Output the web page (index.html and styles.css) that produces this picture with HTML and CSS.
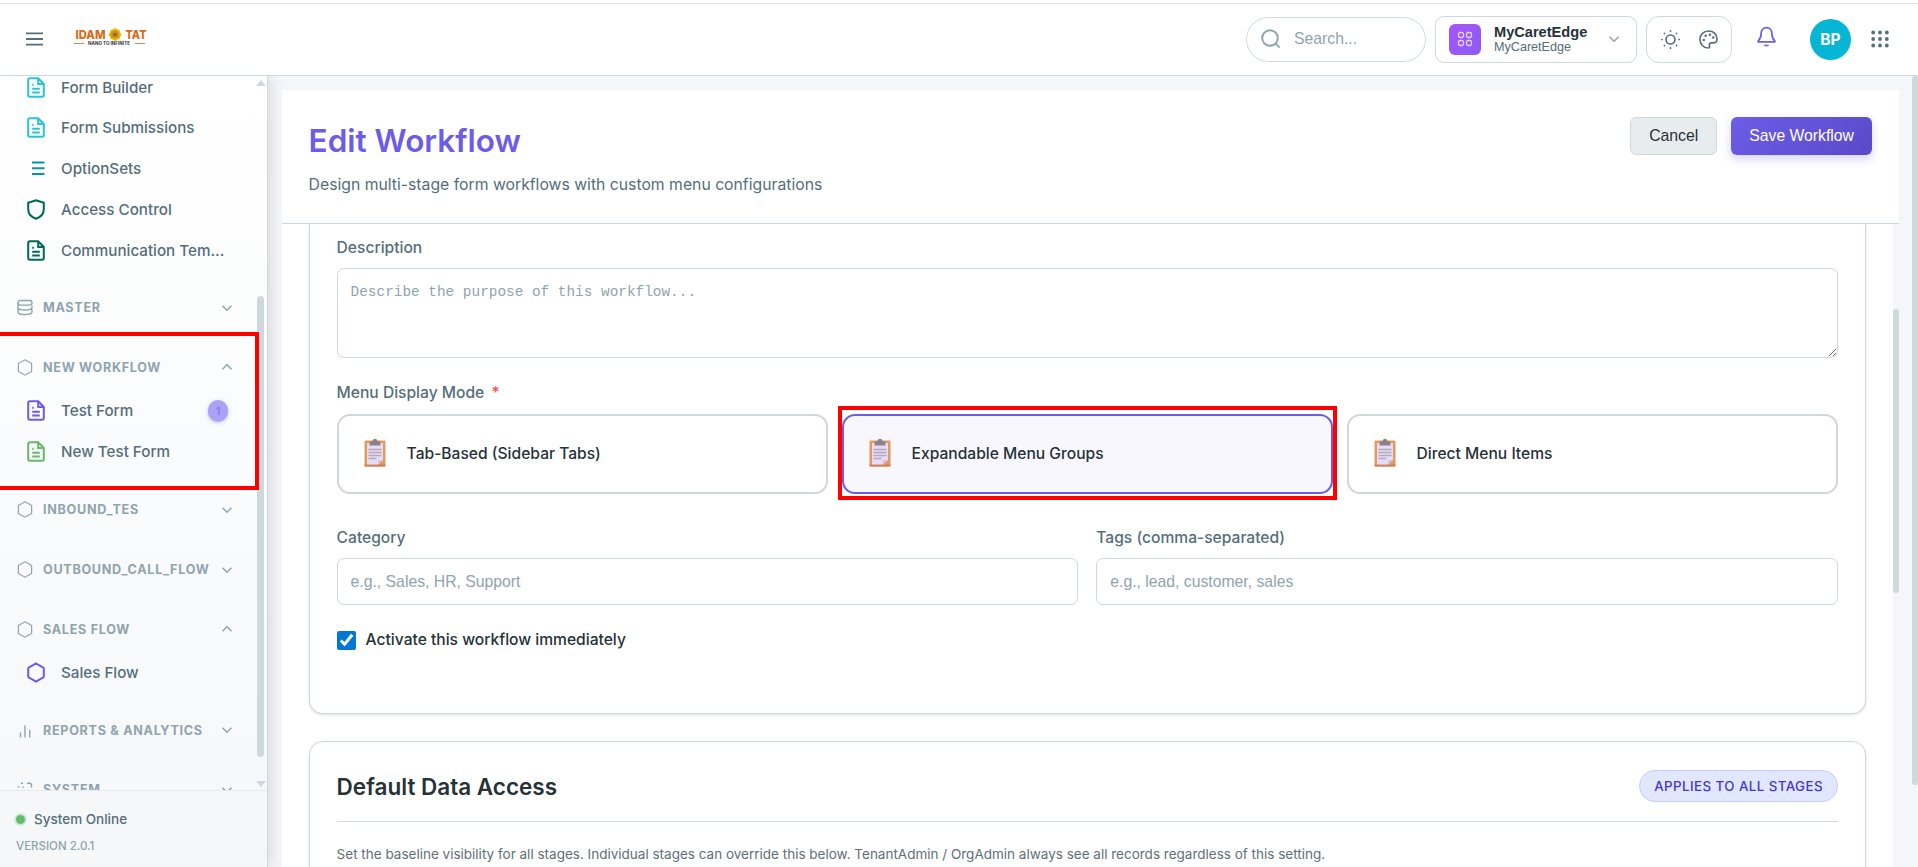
FILE: index.html
```html
<!DOCTYPE html>
<html lang="en">
<head>
    <meta charset="UTF-8">
    <meta name="viewport" content="width=device-width, initial-scale=1.0">
    <title>Edit Workflow</title>
    <link rel="stylesheet" href="styles.css">
</head>
<body>
    <svg class="sprite" xmlns="http://www.w3.org/2000/svg">
        <symbol id="i-file" viewBox="0 0 18 21">
            <path d="M3 1.2h8.2L16.8 7v11a1.8 1.8 0 0 1-1.8 1.8H3A1.8 1.8 0 0 1 1.2 18V3A1.8 1.8 0 0 1 3 1.2z"/>
            <path d="M11.2 1.2V7h5.6M5.2 7.8h1.6M5.2 11.7h7.6M5.2 15.4h7.6"/>
        </symbol>
        <symbol id="i-list" viewBox="0 0 18 21"><path d="M5 4.5h12.5M5 10.3h12.5M5 16h12.5"/></symbol>
        <symbol id="i-shield" viewBox="0 0 18 21"><path d="M9 1.2l7.8 2.6v6.4c0 4.6-3 7.8-7.8 9.6-4.8-1.8-7.8-5-7.8-9.6V3.8z"/></symbol>
        <symbol id="i-hex" viewBox="0 0 18 20"><path d="M9 1l7.300 4.100a1 1 0 0 1 .5.9v8a1 1 0 0 1-.5.9L9 19l-7.300-4.100a1 1 0 0 1-.5-.9V6a1 1 0 0 1 .5-.9z"/></symbol>
        <symbol id="i-db" viewBox="0 0 16 16">
            <rect x="1" y="1" width="14" height="4.6" rx="2.3"/>
            <path d="M1 3.5v9c0 1.400 2.500 2.500 7 2.500s7-1.100 7-2.500V9.800M1 8c0 1.400 2.500 2.500 7 2.500S15 9.400 15 8V6.200"/>
        </symbol>
        <symbol id="i-bars" viewBox="0 0 16 16"><path d="M3.500 10v5M8 3v12M12.700 7.500V15"/></symbol>
        <symbol id="i-scan" viewBox="0 0 16 16"><path d="M1.500 6V4.500M4 1.800h2M10 1.800h2.500a2 2 0 0 1 2 2V6M1.500 10v2.500a2 2 0 0 0 2 2H6M10 14.500h2.500a2 2 0 0 0 2-2V10M6 5v1.500"/></symbol>
        <symbol id="i-chev" viewBox="0 0 12 12"><path d="M1.500 3.800L6 8.300l4.500-4.500"/></symbol>
        <symbol id="i-clipboard" viewBox="0 0 22 28">
            <rect x="0.500" y="1.500" width="21" height="26" rx="1.200" fill="#e39a5f"/>
            <path d="M.5 25.500h21v.8a1.200 1.200 0 0 1-1.200 1.200H1.700A1.200 1.200 0 0 1 .5 26.300z" fill="#ce8058"/>
            <path d="M3 4h16v17l-5 4.500H3z" fill="#e6dcf3"/>
            <path d="M14 25.500V21h5z" fill="#cfc2e0"/>
            <path d="M5.500 6.500V3.800a1.500 1.500 0 0 1 1.500-1.500h1.600a2.400 2.400 0 0 1 4.800 0H15a1.500 1.500 0 0 1 1.500 1.500v2.700z" fill="#8d7f8d"/>
            <path d="M4.500 10.500h13M4.500 13.500h13M4.500 16.500h13M4.500 19.500h8" stroke="#b3a8bf" stroke-width="1.300"/>
        </symbol>
    </svg>

    <header class="topbar">
        <svg class="menu-btn" viewBox="0 0 18 16"><path d="M0 2h18M0 8h18M0 14h18"/></svg>
        <svg class="logo" viewBox="0 0 74 20">
            <text x="1.500" y="11" class="logo-name" textLength="30" lengthAdjust="spacingAndGlyphs">IDAM</text>
            <g transform="translate(41 6.500)">
                <rect x="-5" y="-5" width="10" height="10" rx="2" fill="#f2c200"/>
                <rect x="-5" y="-5" width="10" height="10" rx="2" fill="#eab308" transform="rotate(45)"/>
                <circle r="3.800" fill="#c98a1e"/>
                <circle r="1.800" fill="#7c6a4d"/>
            </g>
            <text x="51.500" y="11" class="logo-name" textLength="21" lengthAdjust="spacingAndGlyphs">TAT</text>
            <path d="M0 15.500h10M61 15.500h10" stroke="#d08a63"/>
            <text x="14" y="17.300" class="logo-tag" textLength="42" lengthAdjust="spacingAndGlyphs">NANO TO INFINITE</text>
        </svg>

        <div class="topbar-right">
            <div class="search">
                <svg viewBox="0 0 20 20"><circle cx="9" cy="9" r="7.800"/><path d="M14.600 14.600l4 4"/></svg>
                <input type="text" placeholder="Search...">
            </div>
            <div class="tenant">
                <span class="tenant-icon">
                    <svg viewBox="0 0 16 16"><rect x="1.500" y="1.500" width="5" height="5" rx="1.700"/><rect x="9.500" y="1.500" width="5" height="5" rx="1.700"/><rect x="1.500" y="9.500" width="5" height="5" rx="1.700"/><rect x="9.500" y="9.500" width="5" height="5" rx="1.700"/></svg>
                </span>
                <span class="tenant-text">
                    <strong>MyCaretEdge</strong>
                    <small>MyCaretEdge</small>
                </span>
                <svg class="chev"><use href="#i-chev"/></svg>
            </div>
            <div class="theme">
                <svg viewBox="0 0 20 20"><circle cx="10" cy="10" r="4.700"/><path stroke-linecap="round" stroke-width="1.800" d="M10 .9v.2M10 18.900v.2M.9 10h.2M18.900 10h.2M3.600 3.600l.1.100M16.300 16.300l.1.100M3.600 16.400l.1-.1M16.300 3.700l.1-.1"/></svg>
                <svg viewBox="0 0 20 20"><path d="M10 1C5 1 1 5 1 10s4 9 8.500 9c1.300 0 1.800-.8 1.600-1.800-.3-1.600-.6-3.700 1.700-3.700h2.700c2 0 3.500-1.500 3.500-4C19 4.500 15 1 10 1z"/><g fill="#546e7a" stroke="none"><circle cx="5" cy="10.500" r="1.300"/><circle cx="7" cy="6" r="1.300"/><circle cx="11.500" cy="5" r="1.300"/><circle cx="15" cy="8" r="1.300"/></g></svg>
            </div>
            <svg class="bell" viewBox="0 0 20 22"><path d="M10 1.200c3.500 0 5.600 2.500 5.600 5.800 0 4.500 1 6 3.200 8.300v.8H1.200v-.8C3.400 13 4.400 11.500 4.400 7c0-3.300 2.100-5.800 5.600-5.800zM7.800 19.300c.6.900 3.800.9 4.400 0"/></svg>
            <span class="avatar">BP</span>
            <svg class="apps" viewBox="0 0 18 18"><g id="dots"><circle cx="2.200" cy="2.500" r="1.900"/><circle cx="9" cy="2.500" r="1.900"/><circle cx="15.800" cy="2.500" r="1.900"/></g><use href="#dots" y="6.500"/><use href="#dots" y="13"/></svg>
        </div>
    </header>

    <div class="layout">
        <aside class="sidebar">
            <div class="nav-wrap">
                <nav class="nav">
                    <a class="item cyan"><svg><use href="#i-file"/></svg>Form Builder</a>
                    <a class="item cyan"><svg><use href="#i-file"/></svg>Form Submissions</a>
                    <a class="item teal"><svg><use href="#i-list"/></svg>OptionSets</a>
                    <a class="item green-dark"><svg><use href="#i-shield"/></svg>Access Control</a>
                    <a class="item green-dark"><svg><use href="#i-file"/></svg>Communication Tem...</a>

                    <div class="group"><svg><use href="#i-db"/></svg>MASTER<svg class="chev"><use href="#i-chev"/></svg></div>

                    <div class="marked">
                        <div class="group"><svg><use href="#i-hex"/></svg>NEW WORKFLOW<svg class="chev up"><use href="#i-chev"/></svg></div>
                        <a class="item purple"><svg><use href="#i-file"/></svg>Test Form<span class="count">1</span></a>
                        <a class="item green"><svg><use href="#i-file"/></svg>New Test Form</a>
                    </div>

                    <div class="group"><svg><use href="#i-hex"/></svg>INBOUND_TES<svg class="chev"><use href="#i-chev"/></svg></div>
                    <div class="group"><svg><use href="#i-hex"/></svg>OUTBOUND_CALL_FLOW<svg class="chev"><use href="#i-chev"/></svg></div>
                    <div class="group"><svg><use href="#i-hex"/></svg>SALES FLOW<svg class="chev up"><use href="#i-chev"/></svg></div>
                    <a class="item purple"><svg><use href="#i-hex"/></svg>Sales Flow</a>
                    <div class="group"><svg><use href="#i-bars"/></svg>REPORTS &amp; ANALYTICS<svg class="chev"><use href="#i-chev"/></svg></div>
                    <div class="group"><svg><use href="#i-scan"/></svg>SYSTEM<svg class="chev"><use href="#i-chev"/></svg></div>
                </nav>
                <div class="nav-scroll">
                    <i class="arrow-up"></i>
                    <i class="thumb"></i>
                    <i class="arrow-down"></i>
                </div>
            </div>
            <div class="sidebar-footer">
                <p class="status"><i></i>System Online</p>
                <p class="version">VERSION 2.0.1</p>
            </div>
        </aside>

        <main class="main">
            <section class="page">
                <div class="page-header">
                    <div>
                        <h1>Edit Workflow</h1>
                        <p>Design multi-stage form workflows with custom menu configurations</p>
                    </div>
                    <div class="actions">
                        <button class="btn">Cancel</button>
                        <button class="btn btn-primary">Save Workflow</button>
                    </div>
                </div>

                <div class="page-body">
                    <div class="page-content">
                        <div class="card card-details">
                            <label for="description">Description</label>
                            <textarea id="description" placeholder="Describe the purpose of this workflow..."></textarea>

                            <label class="mode-label">Menu Display Mode <span class="required">*</span></label>
                            <div class="modes">
                                <div class="mode"><svg><use href="#i-clipboard"/></svg>Tab-Based (Sidebar Tabs)</div>
                                <div class="mode selected"><svg><use href="#i-clipboard"/></svg>Expandable Menu Groups</div>
                                <div class="mode"><svg><use href="#i-clipboard"/></svg>Direct Menu Items</div>
                            </div>

                            <div class="row">
                                <div class="field">
                                    <label for="category">Category</label>
                                    <input type="text" id="category" placeholder="e.g., Sales, HR, Support">
                                </div>
                                <div class="field">
                                    <label for="tags">Tags (comma-separated)</label>
                                    <input type="text" id="tags" placeholder="e.g., lead, customer, sales">
                                </div>
                            </div>

                            <label class="check"><input type="checkbox" checked>Activate this workflow immediately</label>
                        </div>

                        <div class="card card-access">
                            <div class="card-head">
                                <h2>Default Data Access</h2>
                                <span class="pill">APPLIES TO ALL STAGES</span>
                            </div>
                            <p>Set the baseline visibility for all stages. Individual stages can override this below. TenantAdmin / OrgAdmin always see all records regardless of this setting.</p>
                        </div>
                    </div>
                    <div class="page-scroll"><i class="thumb"></i></div>
                </div>
            </section>
        </main>
        <div class="outer-scroll"><i class="thumb"></i></div>
    </div>
</body>
</html>
```
FILE: styles.css
```css
*, *::before, *::after {
    box-sizing: border-box;
}
body {
    margin: 0;
    height: 867px;
    overflow: hidden;
    display: flex;
    flex-direction: column;
    font-family: Inter, "Liberation Sans", sans-serif;
    color: #263238;
    background: #f5f6f9;
}
h1, h2, p {
    margin: 0;
}
svg {
    display: block;
    flex: none;
    fill: none;
    stroke: currentColor;
}
.sprite {
    position: absolute;
    width: 0;
    height: 0;
}
.thumb {
    display: block;
    background: #cfd8dc;
    border-radius: 4px;
}

/* top bar */
.topbar {
    flex: none;
    height: 73px;
    margin-top: 3px;
    padding: 0 29px 0 26px;
    display: flex;
    align-items: center;
    background: #fff;
    border-top: 1px solid #dcdfe1;
    border-bottom: 1px solid #cfd8dc;
    position: relative;
    z-index: 3;
    box-shadow: 0 -3px 0 #fff;
}
.menu-btn {
    width: 17px;
    height: 16px;
    margin-top: -1px;
    color: #546e7a;
    stroke-width: 2;
}
.logo {
    width: 74px;
    height: 20px;
    margin-left: 31px;
    margin-top: -4px;
    stroke: none;
}
.logo-name {
    font: 800 11.7px Inter, sans-serif;
    fill: #d96b1c;
}
.logo-tag {
    font: 700 4.5px Inter, sans-serif;
    fill: #2d3348;
}
.topbar-right {
    margin-left: auto;
    display: flex;
    align-items: center;
    margin-top: -1px;
    font-family: "Liberation Sans", sans-serif;
}
.search {
    width: 180px;
    height: 45px;
    padding-left: 14px;
    display: flex;
    align-items: center;
    gap: 14px;
    border: 1px solid #cfd8dc;
    border-radius: 23px;
}
.search svg {
    width: 20px;
    height: 20px;
    margin-right: -1px;
    color: #90a4ae;
    stroke-width: 1.9;
}
.search input {
    width: 110px;
    padding: 0;
    border: 0;
    background: none;
    font: 15.75px "Liberation Sans", sans-serif;
}
input::placeholder, textarea::placeholder {
    color: #90a4ae;
    opacity: 1;
}
.tenant {
    width: 202px;
    height: 47px;
    margin-left: 9px;
    padding: 0 16px 0 13px;
    display: flex;
    align-items: center;
    border: 1px solid #cfd8dc;
    border-radius: 9px;
}
.tenant-icon {
    width: 32px;
    height: 31px;
    display: grid;
    place-items: center;
    border-radius: 6px;
    color: #e4d4fd;
    background: linear-gradient(135deg, #a855f7, #8b5cf6);
}
.tenant-icon svg {
    width: 16px;
    height: 16px;
    stroke-width: 1.3;
}
.tenant-text {
    margin-left: 13px;
}
.tenant-text strong, .tenant-text small {
    display: block;
}
.tenant-text strong {
    font-size: 14.6px;
    line-height: 16px;
}
.tenant-text small {
    font-size: 12.6px;
    line-height: 14px;
    color: #546e7a;
}
.chev {
    width: 12px;
    height: 12px;
    margin-left: auto;
    stroke-width: 1.5;
    color: #90a4ae;
}
.chev.up {
    transform: rotate(180deg);
}
.theme {
    width: 86px;
    height: 47px;
    margin-left: 9px;
    display: flex;
    align-items: center;
    justify-content: center;
    gap: 19px;
    border: 1px solid #cfd8dc;
    border-radius: 13px;
    color: #546e7a;
}
.theme svg {
    width: 19px;
    height: 19px;
    stroke-width: 1.7;
}
.bell {
    width: 19px;
    height: 22px;
    margin: -4px 0 0 25px;
    color: #6c5ce7;
    stroke-width: 1.8;
    stroke-linejoin: round;
}
.avatar {
    width: 41px;
    height: 41px;
    margin-left: 34px;
    border-radius: 50%;
    display: grid;
    place-items: center;
    color: #fff;
    background: #06b6d4;
    font: 700 15.5px Inter, sans-serif;
}
.apps {
    width: 18px;
    height: 18px;
    margin-left: 20px;
    fill: #546e7a;
    stroke: none;
}

/* sidebar */
.layout {
    flex: 1;
    min-height: 0;
    display: flex;
}
.sidebar {
    width: 268px;
    flex: none;
    display: flex;
    flex-direction: column;
    background: linear-gradient(#fff, #f5f7f9);
    border-right: 1px solid #cfd8dc;
    box-shadow: 2px 0 14px rgba(0, 0, 0, 0.13);
    z-index: 2;
}
.nav-wrap {
    flex: 1;
    min-height: 0;
    display: flex;
    overflow: hidden;
}
.nav {
    width: 257px;
    margin-top: -9.3px;
}
.item {
    height: 40.8px;
    padding: 0 29px 0 27px;
    display: flex;
    align-items: center;
    font-size: 15.2px;
    font-weight: 500;
    color: #546e7a;
}
.item svg {
    width: 18px;
    height: 21px;
    margin-right: 16px;
    stroke-width: 2;
}
.cyan svg { color: #26c6da; }
.teal svg { color: #0097a7; }
.green-dark svg { color: #00695c; }
.green svg { color: #66bb6a; }
.purple svg { color: #6c5ce7; }
.group {
    height: 44px;
    margin: 15.7px 0 1.2px;
    padding: 0 24px 0 17px;
    display: flex;
    align-items: center;
    font-size: 12.6px;
    font-weight: 700;
    letter-spacing: 0.7px;
    color: #90a4ae;
}
.item + .group {
    margin-top: 15px;
}
.group svg:first-child {
    width: 16px;
    height: 17px;
    margin-right: 10px;
    stroke-width: 1.4;
}
.count {
    width: 20px;
    height: 22px;
    margin-left: auto;
    border-radius: 11px;
    display: grid;
    place-items: center;
    font-size: 11px;
    color: #8571f2;
    background: #aca2f5;
    box-shadow: 0 1px 4px rgba(108, 92, 231, 0.35);
}
.marked {
    position: relative;
}
.marked::after {
    content: "";
    position: absolute;
    left: -10px;
    top: -13px;
    width: 269px;
    height: 158px;
    border: 4px solid #f00;
    z-index: 1;
}
.nav-scroll {
    width: 7px;
    padding: 4px 0 3px;
    display: flex;
    flex-direction: column;
    align-items: center;
}
.nav-scroll .thumb {
    width: 7px;
    height: 461px;
    margin-top: 210px;
}
.arrow-up, .arrow-down {
    width: 10px;
    border: 5px solid transparent;
}
.arrow-up {
    border-top: 0;
    border-bottom: 6px solid #cfd8dc;
}
.arrow-down {
    margin-top: auto;
    border-bottom: 0;
    border-top: 6px solid #cfd8dc;
}
.sidebar-footer {
    flex: none;
    height: 77px;
    padding: 18px 16px 0;
    border-top: 1px solid #e6eaed;
    background: #f5f7f9;
}
.status {
    display: flex;
    align-items: center;
    font-size: 13.5px;
    font-weight: 500;
    line-height: 20px;
    color: #546e7a;
}
.status i {
    width: 9px;
    height: 9px;
    margin-right: 9px;
    border-radius: 50%;
    background: #66bb6a;
    box-shadow: 0 0 0 2px #c9ecdf;
}
.version {
    margin-top: 9px;
    font-size: 11.5px;
    font-weight: 500;
    line-height: 16px;
    color: #90a4ae;
}

/* page */
.main {
    flex: 1;
    min-width: 0;
    padding: 14px 13px 0 13.6px;
    display: flex;
}
.page {
    flex: 1;
    min-width: 0;
    display: flex;
    flex-direction: column;
}
.page-header {
    flex: none;
    height: 134px;
    padding: 27px 27px 0;
    display: flex;
    justify-content: space-between;
    background: #fff;
    border-bottom: 1px solid #cfd8dc;
}
h1 {
    font-size: 31.5px;
    font-weight: 600;
    line-height: 47px;
    color: #6c5ce7;
}
.page-header p {
    margin-top: 10px;
    font-size: 15.75px;
    line-height: 22px;
    color: #546e7a;
}
.actions {
    display: flex;
    gap: 14px;
}
.btn {
    height: 38px;
    padding: 0 18px;
    border: 1px solid #cfd8dc;
    border-radius: 6px;
    font: 15.75px "Liberation Sans", sans-serif;
    color: #263238;
    background: #e8ecef;
}
.btn-primary {
    border: 0;
    color: #fff;
    background: linear-gradient(135deg, #6c5ce7, #5a4ac9);
    box-shadow: 0 4px 10px rgba(108, 92, 231, 0.28);
}
.page-body {
    flex: 1;
    min-height: 0;
    display: flex;
    overflow: hidden;
}
.page-content {
    flex: 1;
    min-width: 0;
    padding: 0 27px;
    background: #fff;
}
.page-scroll, .outer-scroll {
    width: 6px;
    flex: none;
}
.page-scroll .thumb {
    height: 284px;
    margin-top: 85px;
}
.outer-scroll .thumb {
    height: 709px;
}
.card {
    padding: 0 27px;
    border: 1px solid #cfd8dc;
    border-radius: 14px;
    background: #fff;
    box-shadow: 0 1px 3px rgba(0, 0, 0, 0.12);
}
.card label {
    display: block;
    font-size: 15.6px;
    font-weight: 500;
    line-height: 22px;
    color: #546e7a;
}
.card-details {
    height: 490px;
    padding-top: 13px;
    border-top: 0;
    border-radius: 0 0 14px 14px;
}
textarea {
    display: block;
    width: 100%;
    height: 90px;
    margin-top: 9px;
    padding: 15px 13px;
    border: 1px solid #cfd8dc;
    border-radius: 7px;
    font: 14.4px "Liberation Mono", monospace;
}
.card .mode-label {
    margin-top: 24px;
}
.required {
    margin-left: 3px;
    color: #ef5350;
}
.modes {
    display: grid;
    grid-template-columns: repeat(3, 1fr);
    gap: 13.5px;
    margin-top: 10px;
}
.mode {
    height: 80px;
    padding: 0 0 2px 25px;
    display: flex;
    align-items: center;
    position: relative;
    border: 2px solid #cfd8dc;
    border-radius: 13px;
    font-size: 15.6px;
    font-weight: 500;
}
.mode svg {
    width: 22px;
    height: 28px;
    margin-right: 21px;
    stroke: none;
}
.mode.selected {
    border-color: #6c5ce7;
    background: #f8f7fe;
}
.mode.selected::after {
    content: "";
    position: absolute;
    inset: -10px -6px -8px;
    border: 4px solid #f00;
}
.row {
    display: flex;
    gap: 18px;
    margin-top: 33px;
}
.field {
    flex: 1;
}
.field input {
    width: 100%;
    height: 47px;
    margin-top: 9px;
    padding: 0 13px;
    border: 1px solid #cfd8dc;
    border-radius: 7px;
    font: 15.75px "Liberation Sans", sans-serif;
}
.card .check {
    display: flex;
    align-items: center;
    margin-top: 24px;
    color: #263238;
}
.check input {
    width: 19px;
    height: 19px;
    margin: 0 10px 0 0;
    accent-color: #0078d4;
}
.card-access {
    height: 300px;
    margin-top: 27px;
}
.card-head {
    height: 80px;
    padding-top: 9px;
    display: flex;
    align-items: center;
    justify-content: space-between;
    border-bottom: 1px solid #cfd8dc;
}
h2 {
    font-size: 22.5px;
    font-weight: 600;
}
.pill {
    height: 32px;
    padding: 0 14px;
    display: flex;
    align-items: center;
    border: 1px solid #c7cbfb;
    border-radius: 16px;
    background: #e0e7ff;
    font-size: 13.3px;
    font-weight: 500;
    letter-spacing: 0.45px;
    color: #4338ca;
}
.card-access p {
    margin-top: 22px;
    font-size: 13.5px;
    line-height: 20px;
    color: #607078;
}
```
